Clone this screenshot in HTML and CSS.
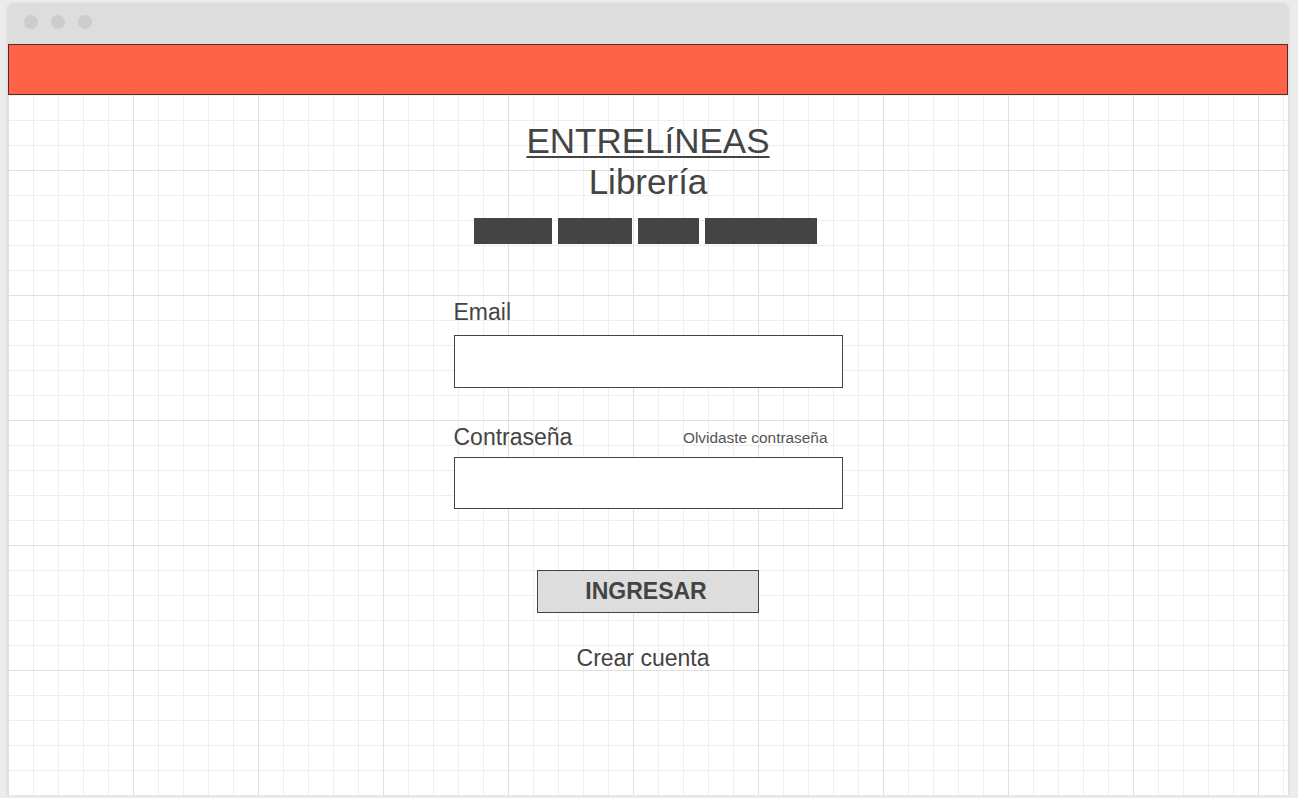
FILE: index.html
```html
<!DOCTYPE html>
<html lang="es">
<head>
<meta charset="utf-8">
<title>Entrelíneas - Ingresar</title>
<link rel="stylesheet" href="styles.css">
</head>
<body>
<div class="window">
  <div class="titlebar">
    <span class="dot"></span><span class="dot"></span><span class="dot"></span>
  </div>
  <header class="topbar"></header>
  <main class="canvas">
    <div class="brand">
      <a class="brand-name" href="#">ENTRELíNEAS</a>
      <div class="brand-sub">Librería</div>
    </div>
    <nav class="nav">
      <span class="nav-item nav-a"></span>
      <span class="nav-item nav-b"></span>
      <span class="nav-item nav-c"></span>
      <span class="nav-item nav-d"></span>
    </nav>
    <form class="login">
      <label class="label" for="email">Email</label>
      <input class="field field-email" id="email" type="text">
      <div class="pass-row">
        <label class="label" for="pass">Contraseña</label>
        <a class="forgot" href="#">Olvidaste contraseña</a>
      </div>
      <input class="field field-pass" id="pass" type="password">
      <button class="submit" type="button">INGRESAR</button>
      <a class="create" href="#">Crear cuenta</a>
    </form>
  </main>
</div>
</body>
</html>
```

FILE: styles.css
```css
html, body {
  margin: 0;
  padding: 0;
}
body {
  background: #ececec;
  font-family: "Liberation Sans", Arial, sans-serif;
  color: #444;
  width: 1298px;
  height: 798px;
  overflow: hidden;
}
.window {
  margin: 3px 0 0 7px;
  width: 1282px;
  height: 792px;
  box-sizing: border-box;
  padding: 0 1px;
  background: #dddddd;
  border-radius: 7px 7px 0 0;
  box-shadow: 0 0 3px rgba(0,0,0,0.08);
  display: flex;
  flex-direction: column;
}
.titlebar {
  height: 41px;
  box-sizing: border-box;
  padding: 12px 0 0 16px;
  display: flex;
  gap: 13px;
}
.dot {
  width: 14px;
  height: 14px;
  border-radius: 50%;
  background: #cccccc;
}
.topbar {
  height: 51px;
  box-sizing: border-box;
  background: #ff6347;
  border: 1px solid #5a2a20;
}
.canvas {
  flex: 1;
  background-color: #fff;
  background-image:
    linear-gradient(to right, #e0e0e0 1px, transparent 1px),
    linear-gradient(to bottom, #e0e0e0 1px, transparent 1px),
    linear-gradient(to right, #eeeeee 1px, transparent 1px),
    linear-gradient(to bottom, #eeeeee 1px, transparent 1px);
  background-size: 125px 125px, 125px 125px, 25px 25px, 25px 25px;
  background-position: 0 0, 0 75px, 0 0, 0 0;
  display: flex;
  flex-direction: column;
  align-items: center;
  padding-top: 26px;
  box-sizing: border-box;
}
.brand {
  display: flex;
  flex-direction: column;
  align-items: center;
  font-size: 35px;
  line-height: 40px;
}
.brand-name {
  color: #444;
  text-decoration: underline;
  text-decoration-thickness: 2px;
  text-underline-offset: 3px;
}
.brand-sub {
  color: #444;
  margin-top: 1px;
}
.nav {
  margin-top: 16px;
  display: flex;
  gap: 6px;
  height: 26px;
  padding-right: 5px;
}
.nav-item {
  background: #444;
  height: 26px;
}
.nav-a { width: 78px; }
.nav-b { width: 74px; }
.nav-c { width: 61px; }
.nav-d { width: 112px; }
.login {
  margin-top: 55px;
  width: 389px;
  display: flex;
  flex-direction: column;
}
.label {
  font-size: 23px;
  line-height: 26px;
  color: #444;
}
.field {
  display: block;
  box-sizing: border-box;
  width: 389px;
  border: 1px solid #444;
  background: #fff;
  margin: 0;
  padding: 0 10px;
  font: inherit;
}
.field-email {
  margin-top: 10px;
  height: 53px;
}
.pass-row {
  margin-top: 36px;
  height: 26px;
  display: flex;
  justify-content: space-between;
  align-items: center;
  padding-right: 15px;
}
.forgot {
  font-size: 15.4px;
  line-height: 18px;
  color: #555;
  text-decoration: none;
  margin-top: 1px;
}
.field-pass {
  margin-top: 7px;
  height: 52px;
}
.submit {
  align-self: center;
  margin-top: 61px;
  width: 222px;
  height: 43px;
  box-sizing: border-box;
  background: #dddddd;
  border: 1px solid #444;
  font-family: "Liberation Sans", Arial, sans-serif;
  font-weight: bold;
  font-size: 23px;
  color: #444;
  padding: 0 4px 0 0;
  border-radius: 0;
}
.create {
  align-self: center;
  margin-top: 32px;
  font-size: 23px;
  line-height: 26px;
  color: #444;
  text-decoration: none;
  padding-right: 10px;
}
```
